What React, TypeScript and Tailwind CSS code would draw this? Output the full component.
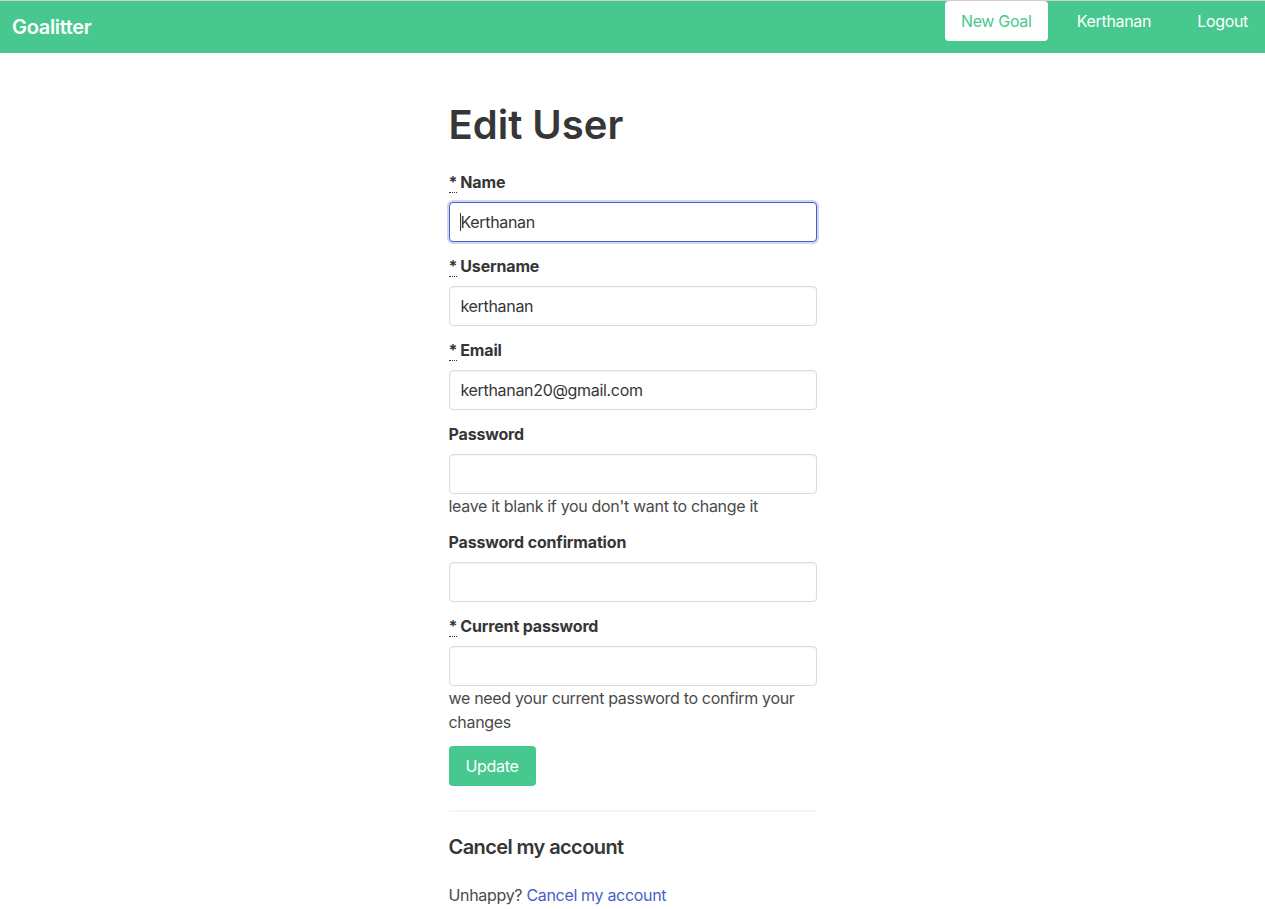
import React from "react";

const font = { fontFamily: "Inter, 'Liberation Sans', sans-serif" };

function Req() {
  return (
    <abbr title="required" className="no-underline border-b border-dotted border-[#363636] cursor-help mr-[3px]">
      *
    </abbr>
  );
}

function Field({
  label,
  required,
  value,
  focused,
  hint,
  type = "text",
}: {
  label: string;
  required?: boolean;
  value?: string;
  focused?: boolean;
  hint?: string;
  type?: string;
}) {
  return (
    <div className="mb-3">
      <label className="block text-[16px] leading-6 font-bold text-[#363636] mb-2 tracking-[-0.01em]">
        {required && <Req />}
        {label}
      </label>
      <div className="relative">
        <input
          type={type}
          defaultValue={value}
          className={
            "block w-full h-10 px-[11px] rounded-[4px] border text-[16px] tracking-[-0.02em] text-[#363636] bg-white outline-none " +
            (focused
              ? "border-[#485fc7] shadow-[0_0_0_2px_rgba(72,95,199,0.25)]"
              : "border-[#dbdbdb] shadow-[inset_0_1px_2px_rgba(10,10,10,0.05)]")
          }
        />
        {focused && <span className="absolute left-[11px] top-[11px] w-px h-[18px] bg-[#363636]" />}
      </div>
      {hint && <p className="text-[16px] leading-6 text-[#4a4a4a] tracking-[-0.02em]">{hint}</p>}
    </div>
  );
}

export default function App() {
  return (
    <div className="min-h-[909px] bg-white text-[#4a4a4a]" style={font}>
      <nav className="h-[53px] bg-[#47c88f] border-t border-[#d0d0d0] flex items-start justify-between tracking-[-0.02em]">
        <a className="h-[52px] pl-3 flex items-center text-white text-[20px] font-semibold">Goalitter</a>
        <div className="flex items-start text-[16px]">
          <a className="h-10 w-[103px] flex items-center justify-center bg-white text-[#47c88f] rounded-[4px]">New Goal</a>
          <a className="h-10 ml-[29px] flex items-center text-white">Kerthanan</a>
          <a className="h-10 ml-[46px] mr-[17px] flex items-center text-white">Logout</a>
        </div>
      </nav>

      <main className="w-[368px] mx-auto pt-[48px]">
        <h1 className="text-[40px] leading-[48px] font-semibold text-[#363636] mb-[21px]">Edit User</h1>

        <Field label="Name" required value="Kerthanan" focused />
        <Field label="Username" required value="kerthanan" />
        <Field label="Email" required value="kerthanan20@gmail.com" />
        <Field label="Password" type="password" hint="leave it blank if you don't want to change it" />
        <Field label="Password confirmation" type="password" />
        <Field
          label="Current password"
          required
          type="password"
          hint="we need your current password to confirm your changes"
        />

        <button className="h-10 w-[87px] rounded-[4px] bg-[#47c88f] text-white text-[16px] tracking-[-0.02em]">Update</button>

        <hr className="my-6 h-[2px] border-0 bg-[#f5f5f5]" />

        <h3 className="text-[20px] leading-[22.5px] font-semibold text-[#363636] mb-6 tracking-[-0.03em]">Cancel my account</h3>

        <p className="text-[16px] leading-6 tracking-[-0.02em]">
          Unhappy? <a className="text-[#485fc7] cursor-pointer">Cancel my account</a>
        </p>
      </main>
    </div>
  );
}
